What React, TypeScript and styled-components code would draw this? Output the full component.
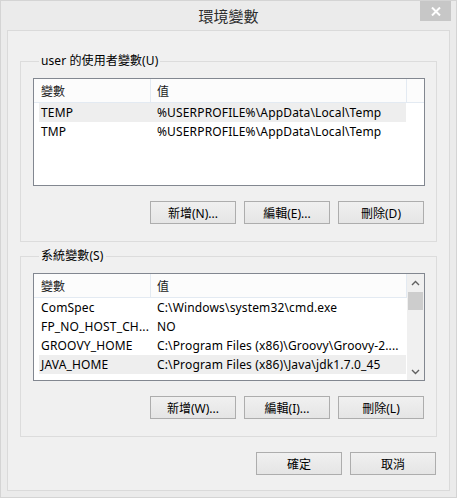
import React from "react";
import styled, { createGlobalStyle } from "styled-components";

const FONT = `"Noto Sans", "Noto Sans CJK TC", sans-serif`;

const GlobalStyle = createGlobalStyle`
  html, body { margin: 0; padding: 0; background: #ebebeb; }
  body { font-family: ${FONT}; }
  * { box-sizing: border-box; }
`;

const Window = styled.div`
  width: 457px;
  height: 498px;
  background: #ebebeb;
  border: 1px solid #d4d4d4;
  display: flex;
  flex-direction: column;
  font-family: ${FONT};
  font-size: 12px;
  color: #000;
`;

const TitleBar = styled.div`
  height: 29px;
  flex: none;
  display: grid;
  grid-template-columns: 1fr auto 1fr;
  align-items: center;
`;

const Title = styled.div`
  grid-column: 2;
  font-size: 15px;
  color: #2b2b2b;
  line-height: 29px;
  padding-top: 1px;
`;

const CloseButton = styled.div`
  grid-column: 3;
  justify-self: end;
  align-self: start;
  width: 31px;
  height: 20px;
  margin-right: 5px;
  background: #c7c7c7;
  display: flex;
  align-items: center;
  justify-content: center;
`;

const Client = styled.div`
  flex: none;
  height: 461px;
  margin: 0 6px;
  background: #f0f0f0;
  border: 1px solid #dadada;
  padding: 22px 12px 0;
  display: flex;
  flex-direction: column;
`;

const Group = styled.fieldset<{ $gap?: number }>`
  margin: ${(p) => p.$gap ?? 0}px 0 0;
  padding: 9px 11px 17px 12px;
  border: 1px solid #dcdcdc;
  min-inline-size: 0;
`;

const Legend = styled.legend`
  padding: 0 2px;
  margin-left: 6px;
  font-size: 12px;
  line-height: 16px;
  color: #000;
  letter-spacing: 0.1px;
`;

const ListBox = styled.div`
  height: 108px;
  border: 1px solid #828790;
  background: #fff;
  display: flex;
  overflow: hidden;
`;

const ListContent = styled.div`
  flex: 1;
  min-width: 0;
  display: flex;
  flex-direction: column;
`;

const Header = styled.div`
  display: grid;
  grid-template-columns: 117px 256px 1fr;
  height: 24px;
  border-bottom: 1px solid #e3eaf2;
  background: #fcfcfc;
`;

const HeaderCell = styled.div<{ $pad: number }>`
  padding-left: ${(p) => p.$pad}px;
  padding-top: 2px;
  line-height: 21px;
  border-right: 1px solid #e3eaf2;
  color: #1a1a1a;
  white-space: nowrap;
  &:last-child { border-right: none; }
`;

const Row = styled.div<{ $selected?: boolean }>`
  display: grid;
  grid-template-columns: 111px 256px;
  margin-left: 5px;
  width: 367px;
  height: 19px;
  background: ${(p) => (p.$selected ? "#eeeeee" : "transparent")};
`;

const Cell = styled.div<{ $pad: number }>`
  padding-left: ${(p) => p.$pad}px;
  padding-top: 1px;
  line-height: 18px;
  letter-spacing: 0.15px;
  white-space: nowrap;
  overflow: hidden;
`;

const ScrollBar = styled.div`
  width: 17px;
  flex: none;
  background: #f0f0f0;
  display: flex;
  flex-direction: column;
`;

const ArrowBtn = styled.div`
  height: 17px;
  display: flex;
  align-items: center;
  justify-content: center;
`;

const Thumb = styled.div`
  height: 18px;
  margin: 1px 1px 0;
  background: #cdcdcd;
`;

const Track = styled.div`
  flex: 1;
`;

const ButtonRow = styled.div<{ $top: number }>`
  display: flex;
  justify-content: flex-end;
  gap: 8px;
  margin-top: ${(p) => p.$top}px;
  padding-right: 1px;
`;

const Button = styled.div`
  width: 86px;
  height: 23px;
  border: 1px solid #adadad;
  background: linear-gradient(#f0f0f0, #e5e5e5);
  display: flex;
  align-items: center;
  justify-content: center;
  font-size: 12px;
  color: #000;
  white-space: nowrap;
`;

type Item = { name: string; value: string; selected?: boolean };

const userVars: Item[] = [
  { name: "TEMP", value: "%USERPROFILE%\\AppData\\Local\\Temp", selected: true },
  { name: "TMP", value: "%USERPROFILE%\\AppData\\Local\\Temp" },
];

const sysVars: Item[] = [
  { name: "ComSpec", value: "C:\\Windows\\system32\\cmd.exe" },
  { name: "FP_NO_HOST_CH...", value: "NO" },
  { name: "GROOVY_HOME", value: "C:\\Program Files (x86)\\Groovy\\Groovy-2...." },
  { name: "JAVA_HOME", value: "C:\\Program Files (x86)\\Java\\jdk1.7.0_45", selected: true },
];

const Chevron = ({ up }: { up?: boolean }) => (
  <svg width="9" height="6" viewBox="0 0 9 6">
    <path
      d={up ? "M1 5 L4.5 1.5 L8 5" : "M1 1 L4.5 4.5 L8 1"}
      fill="none"
      stroke="#606060"
      strokeWidth="1.4"
    />
  </svg>
);

const List = ({ items, scroll }: { items: Item[]; scroll?: boolean }) => (
  <ListBox>
    <ListContent>
      <Header>
        <HeaderCell $pad={7}>變數</HeaderCell>
        <HeaderCell $pad={6}>值</HeaderCell>
        <HeaderCell $pad={0} />
      </Header>
      {items.map((it) => (
        <Row key={it.name} $selected={it.selected}>
          <Cell $pad={2}>{it.name}</Cell>
          <Cell $pad={7}>{it.value}</Cell>
        </Row>
      ))}
    </ListContent>
    {scroll && (
      <ScrollBar>
        <ArrowBtn>
          <Chevron up />
        </ArrowBtn>
        <Thumb />
        <Track />
        <ArrowBtn>
          <Chevron />
        </ArrowBtn>
      </ScrollBar>
    )}
  </ListBox>
);

export default function App() {
  return (
    <>
      <GlobalStyle />
      <Window>
        <TitleBar>
          <Title>環境變數</Title>
          <CloseButton>
            <svg width="10" height="9" viewBox="0 0 10 9">
              <path d="M1 0.5 L9 8.5 M9 0.5 L1 8.5" stroke="#fff" strokeWidth="2" />
            </svg>
          </CloseButton>
        </TitleBar>
        <Client>
          <Group>
            <Legend>user 的使用者變數(U)</Legend>
            <List items={userVars} />
            <ButtonRow $top={15}>
              <Button>新增(N)...</Button>
              <Button>編輯(E)...</Button>
              <Button>刪除(D)</Button>
            </ButtonRow>
          </Group>
          <Group $gap={6}>
            <Legend>系統變數(S)</Legend>
            <List items={sysVars} scroll />
            <ButtonRow $top={15}>
              <Button>新增(W)...</Button>
              <Button>編輯(I)...</Button>
              <Button>刪除(L)</Button>
            </ButtonRow>
          </Group>
          <ButtonRow $top={15}>
            <Button>確定</Button>
            <Button>取消</Button>
          </ButtonRow>
        </Client>
      </Window>
    </>
  );
}
